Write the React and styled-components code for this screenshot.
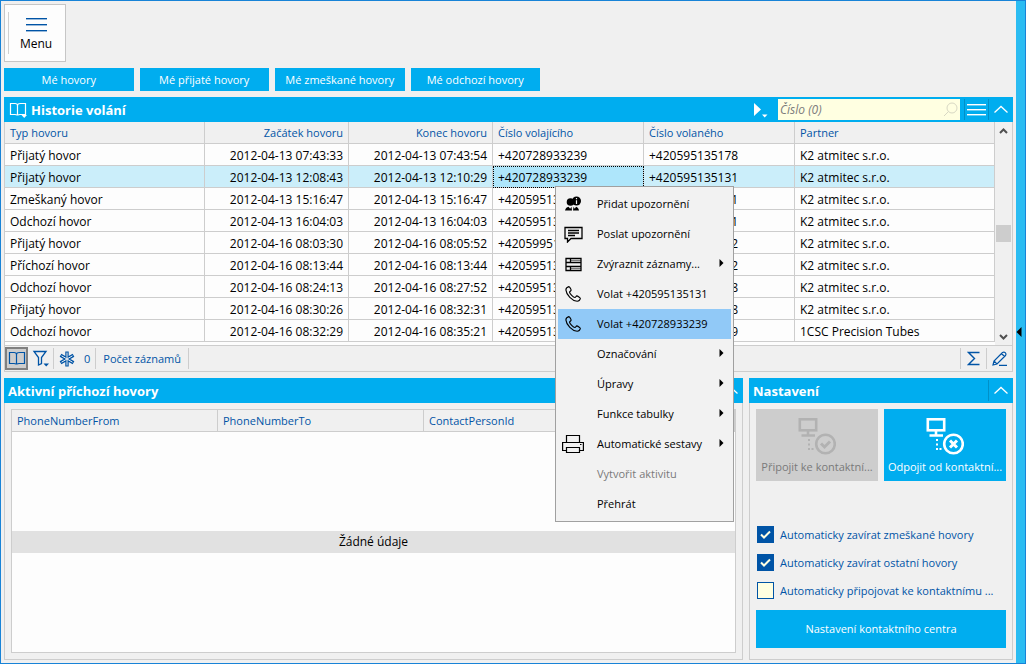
import styled, { createGlobalStyle, css } from "styled-components";

const GlobalStyle = createGlobalStyle`
  * {
    box-sizing: border-box;
  }
  body {
    margin: 0;
    background: #f0f0f0;
    color: #000;
    font-family: "Open Sans", "Noto Sans", sans-serif;
    font-size: 11px;
    line-height: 16px;
  }
  button,
  input {
    font: inherit;
    color: inherit;
    margin: 0;
    padding: 0;
    border: 0;
    background: none;
  }
`;

const colors = {
  accent: "#00adef",
  navy: "#0054a6",
  line: "#cdcdcd",
  paper: "#fdfdfd",
  cream: "#ffffe1",
};

const Window = styled.div`
  position: relative;
  display: flex;
  min-height: 100vh;
  border: 1px solid #1883d7;
`;

const Page = styled.main`
  flex: 1;
  min-width: 0;
  display: flex;
  flex-direction: column;
  padding: 3px;
`;

const SideStrip = styled.aside`
  width: 9px;
  display: flex;
  align-items: center;
  background: #2bbcf2;
`;

const MenuButton = styled.button`
  align-self: flex-start;
  display: flex;
  width: 62px;
  height: 58px;
  padding: 7px 2px 7px 3px;
  border: 1px solid #c6c6c6;
  background: ${colors.paper};
  font-size: 12px;
`;

const MenuGrip = styled.span`
  width: 1px;
  align-self: stretch;
  background: #d0d0d0;
`;

const MenuLabel = styled.span`
  flex: 1;
  display: flex;
  flex-direction: column;
  align-items: center;
  gap: 3px;
  padding-top: 5px;
`;

const QuickBar = styled.nav`
  display: flex;
  gap: 6px;
  max-width: 536px;
  margin: 6px 0;
`;

const AccentButton = styled.button`
  flex: ${({ $wide }) => ($wide ? "none" : "1")};
  height: ${({ $wide }) => ($wide ? "38px" : "23px")};
  background: ${colors.accent};
  color: #fff;
  white-space: nowrap;
`;

const Panel = styled.section`
  display: flex;
  flex-direction: column;
  min-width: 0;
`;

const PanelHeader = styled.header`
  display: flex;
  align-items: center;
  height: 25px;
  padding: 0 1px 0 4px;
  background: ${colors.accent};
  color: #fff;
`;

const PanelTitle = styled.h2`
  flex: 1;
  margin: 0;
  font-size: 13px;
  font-weight: 700;
`;

const HeaderButton = styled.button`
  display: flex;
  align-items: center;
  justify-content: center;
  width: 24px;
  height: 21px;
  border-left: ${({ $divided }) => ($divided ? "1px solid #0090c8" : "0")};
`;

const BookButton = styled(HeaderButton)`
  width: 20px;
  margin-right: 3px;
`;

const SearchBox = styled.label`
  display: flex;
  align-items: center;
  width: 182px;
  height: 21px;
  margin: 0 4px 0 6px;
  padding: 0 2px;
  background: ${colors.cream};
  color: #7c7c7c;
`;

const SearchInput = styled.input`
  flex: 1;
  min-width: 0;
  font-size: 12px;
  font-style: italic;
  outline: 0;
  &::placeholder {
    color: #7c7c7c;
    opacity: 1;
  }
`;

const PanelBody = styled.div`
  flex: 1;
  display: flex;
  flex-direction: column;
  padding: 6px;
  border: solid ${colors.line};
  border-width: 0 1px 1px;
`;

const GridArea = styled.div`
  display: flex;
  border: solid ${colors.line};
  border-width: 0 1px 1px;
`;

const TableHolder = styled.div`
  flex: 1;
  min-width: 0;
  padding-bottom: 3px;
  background: ${colors.paper};
`;

const Table = styled.table`
  width: 100%;
  table-layout: fixed;
  border-collapse: separate;
  border-spacing: 0;
`;

const Th = styled.th`
  width: ${({ $width }) => $width || "auto"};
  height: 22px;
  padding: 0 5px;
  border: solid ${colors.line};
  border-width: 0 1px 1px 0;
  background: #f0f0f0;
  color: ${colors.navy};
  font-weight: 400;
  text-align: ${({ $align }) => $align || "left"};
  white-space: nowrap;
`;

const Td = styled.td`
  height: 22px;
  padding: 2px 5px 0 5px;
  border: solid ${colors.line};
  border-width: 0 1px 1px 0;
  font-size: 12px;
  text-align: ${({ $align }) => $align || "left"};
  white-space: nowrap;
  overflow: hidden;
  ${({ $focused }) =>
    $focused &&
    css`
      background: #aee6fb;
      outline: 1px dotted #000;
      outline-offset: -1px;
    `}
`;

const Tr = styled.tr`
  background: ${({ $selected }) => ($selected ? "#cbeefa" : colors.paper)};
`;

const ScrollBar = styled.div`
  display: flex;
  flex-direction: column;
  align-items: center;
  justify-content: space-between;
  width: 17px;
  padding: 6px 0 5px;
`;

const Thumb = styled.span`
  width: 15px;
  height: 17px;
  margin-top: 91px;
  margin-bottom: auto;
  background: #cdcdcd;
`;

const StatusBar = styled.footer`
  display: flex;
  align-items: center;
  height: 26px;
  margin-bottom: 6px;
  border: solid ${colors.line};
  border-width: 0 1px 1px;
  color: ${colors.navy};
`;

const StatusItem = styled.button`
  display: flex;
  align-items: center;
  justify-content: center;
  gap: 9px;
  height: 21px;
  padding: 0 ${({ $pad }) => $pad || "7px"};
  border: solid ${colors.line};
  border-width: 0 ${({ $right }) => ($right ? "1px" : "0")} 0
    ${({ $left }) => ($left ? "1px" : "0")};
`;

const PressedItem = styled.button`
  display: flex;
  align-items: center;
  justify-content: center;
  width: 23px;
  height: 23px;
  border: 2px solid #808080;
  background: #cdcdcd;
`;

const Spacer = styled.span`
  flex: 1;
`;

const Columns = styled.div`
  flex: 1;
  display: grid;
  grid-template-columns: minmax(0, 1fr) 264px;
  gap: 6px;
`;

const EmptyGrid = styled.div`
  flex: 1;
  display: flex;
  flex-direction: column;
  border: 1px solid ${colors.line};
  background: ${colors.paper};
`;

const EmptyArea = styled.div`
  flex: 1;
  display: flex;
  flex-direction: column;
  justify-content: center;
`;

const EmptyNote = styled.p`
  margin: 0;
  padding: 3px 0;
  background: #e1e1e1;
  font-size: 12px;
  text-align: center;
`;

const Tiles = styled.div`
  display: grid;
  grid-template-columns: repeat(2, minmax(0, 1fr));
  gap: 6px;
`;

const Tile = styled.button`
  display: flex;
  flex-direction: column;
  align-items: center;
  justify-content: space-between;
  height: 72px;
  padding: 8px 0 6px;
  background: ${({ disabled }) => (disabled ? "#cdcdcd" : colors.accent)};
  color: ${({ disabled }) => (disabled ? "#7a7a7a" : "#fff")};
  white-space: nowrap;
  svg {
    color: ${({ disabled }) => (disabled ? "#b2b2b2" : "#fff")};
  }
`;

const Options = styled.div`
  display: flex;
  flex-direction: column;
  gap: 11px;
  margin: 45px 0 11px;
  padding-left: 1px;
`;

const Option = styled.label`
  display: flex;
  align-items: center;
  gap: 6px;
  height: 17px;
  color: ${colors.navy};
  white-space: nowrap;
`;

const CheckFrame = styled.span`
  display: grid;
  > * {
    grid-area: 1 / 1;
  }
  > svg {
    pointer-events: none;
  }
`;

const CheckInput = styled.input`
  appearance: none;
  width: 17px;
  height: 17px;
  border: 1px solid ${colors.navy};
  background: ${colors.cream};
  &:checked {
    background: ${colors.navy};
  }
`;

const ContextMenu = styled.div`
  position: absolute;
  top: 185px;
  left: 554px;
  width: 179px;
  padding: 2px;
  border: 1px solid #a0a0a0;
  background: #f2f2f2;
`;

const MenuItem = styled.button`
  display: flex;
  align-items: center;
  width: 100%;
  height: 30px;
  padding-right: 7px;
  text-align: left;
  white-space: nowrap;
  background: ${({ $active }) => ($active ? "#91c9f7" : "none")};
  color: ${({ disabled }) => (disabled ? "#7a7a7a" : "#000")};
`;

const MenuIcon = styled.span`
  width: 30px;
  margin-right: 9px;
  display: flex;
  align-items: center;
  justify-content: center;
`;

const MenuText = styled.span`
  flex: 1;
`;

const Stroke = ({ w = 20, h = 20, box, sw = 1, children }) => (
  <svg
    width={w}
    height={h}
    viewBox={box || `0 0 ${w} ${h}`}
    fill="none"
    stroke="currentColor"
    strokeWidth={sw}
    aria-hidden="true"
  >
    {children}
  </svg>
);

const Lines = ({ w, h, gap, color = "currentColor" }) => (
  <Stroke w={w} h={h} sw={1.4}>
    {[0, 1, 2].map((i) => (
      <path key={i} d={`M0 ${i * gap + 1.7}H${w}`} stroke={color} />
    ))}
  </Stroke>
);

const Book = ({ arrow }) => (
  <Stroke w={18} h={17} sw={1.2}>
    <path d="M1.5 2.5H6C7.5 2.5 8.5 3 8.5 4.5V14.5C8.5 13.5 7.5 13.5 6 13.5H1.5ZM16.5 2.5H11.5C9.5 2.5 8.5 3 8.5 4.5V14.5C8.5 13.5 9.5 13.5 11 13.5H16.5Z" />
    {arrow && <path d="M12.5 14H18L15.2 17Z" fill="currentColor" stroke="none" />}
  </Stroke>
);

const Chevron = () => (
  <Stroke w={14} h={9} sw={1.3}>
    <path d="M0.5 7.5L7 1.5L13.5 7.5" />
  </Stroke>
);

const Phone = () => (
  <Stroke w={18} h={18} box="0 0 24 24" sw={1.5}>
    <path d="M6.5 2.2C5 2.7 2.5 4.5 2.5 6.5C3 13 11 21.3 17.6 21.7C19.5 21.6 21.5 19.4 21.9 17.9C22 17.2 18 14.5 17.2 14.5C16 14.7 15.6 16.5 14.6 16.7C12.5 16.5 7.5 11.5 7.4 9.5C7.7 8.5 9.4 8 9.5 6.9C9.6 6 7.4 2.2 6.5 2.2Z" />
  </Stroke>
);

const ContactCentre = ({ ok }) => (
  <Stroke w={38} h={38} sw={2.6}>
    <rect x="1.8" y="2.3" width="16.4" height="11" />
    <path d="M10 13.5V18M3.5 18.5H17" />
    <path d="M11 22V24M11 26.5V28.5M11 31V33M14.5 31V33" strokeWidth={2} />
    <circle cx="27.5" cy="27" r="9.3" />
    {ok ? (
      <path d="M23 26.5L26.5 30L32 24.5" strokeWidth={3} />
    ) : (
      <path d="M24 23.5L31 30.5M31 23.5L24 30.5" strokeWidth={3} />
    )}
  </Stroke>
);

const Notice = () => (
  <svg width="18" height="16" viewBox="0 0 18 16" fill="#000" aria-hidden="true">
    <circle cx="6.5" cy="6" r="3.8" />
    <path d="M1 14.5C1.5 12 3 11.3 4.5 10.8L6.2 12.8L7.5 10.8L8 14.5Z" />
    <path d="M9 14.5L9.5 10.8L10.8 12.8L12 10.8C13.5 11.3 14.5 12.5 15 14.5Z" />
    <circle cx="12.5" cy="5" r="4.5" />
    <path d="M12.5 2V3.3M12.5 4.3V8" stroke="#f2f2f2" strokeWidth="1.2" />
  </svg>
);

const Message = () => (
  <Stroke w={19} h={17} sw={1.3}>
    <path d="M1 1.5H18V12.5H7L3.5 16V12.5H1ZM4 4.5H15M4 7H15M4 9.5H11" />
  </Stroke>
);

const Records = () => (
  <Stroke w={17} h={15} sw={1.3}>
    <path d="M1 1.5H16V13.5H1ZM1 5.5H16M1 9.5H16M5.5 1.5V5.5M5.5 9.5V13.5" />
    <path d="M5.5 3.5H16M5.5 11.5H16" strokeWidth="0.5" />
  </Stroke>
);

const Printer = () => (
  <Stroke w={22} h={20} sw={1.2}>
    <path d="M4.5 8.5V1.5H17.5V8.5M4.5 16.5H0.6V8.5H21.4V16.5H17.5M4.5 13.5H17.5V18.5H4.5Z" />
    <path d="M18 10.5H19.5" />
  </Stroke>
);

const Arrow = () => (
  <svg width="5" height="10" viewBox="0 0 5 10" aria-hidden="true">
    <path d="M0.5 0L4.5 4L0.5 8Z" fill="#000" />
  </svg>
);

const columns = [
  { label: "Typ hovoru", width: "200px" },
  { label: "Začátek hovoru", width: "144px", align: "right" },
  { label: "Konec hovoru", width: "144px", align: "right" },
  { label: "Číslo volajícího", width: "151px" },
  { label: "Číslo volaného", width: "151px" },
  { label: "Partner" },
];

const K2 = "K2 atmitec s.r.o.";

const calls = [
  ["Přijatý hovor", "2012-04-13 07:43:33", "2012-04-13 07:43:54", "+420728933239", "+420595135178", K2],
  ["Přijatý hovor", "2012-04-13 12:08:43", "2012-04-13 12:10:29", "+420728933239", "+420595135131", K2],
  ["Zmeškaný hovor", "2012-04-13 15:16:47", "2012-04-13 15:16:47", "+420595135178", "+420595135131", K2],
  ["Odchozí hovor", "2012-04-13 16:04:03", "2012-04-13 16:04:03", "+420595135178", "+420595135131", K2],
  ["Přijatý hovor", "2012-04-16 08:03:30", "2012-04-16 08:05:52", "+420599513517", "+420595135132", K2],
  ["Příchozí hovor", "2012-04-16 08:13:44", "2012-04-16 08:13:44", "+420595135131", "+420595135132", K2],
  ["Odchozí hovor", "2012-04-16 08:24:13", "2012-04-16 08:27:52", "+420595135131", "+420595135178", K2],
  ["Přijatý hovor", "2012-04-16 08:30:26", "2012-04-16 08:32:31", "+420595135131", "+420595135178", K2],
  ["Odchozí hovor", "2012-04-16 08:32:29", "2012-04-16 08:35:21", "+420595135131", "+420595135139", "1CSC Precision Tubes"],
];

const menuItems = [
  { label: "Přidat upozornění", icon: <Notice /> },
  { label: "Poslat upozornění", icon: <Message /> },
  { label: "Zvýraznit záznamy...", icon: <Records />, sub: true },
  { label: "Volat +420595135131", icon: <Phone /> },
  { label: "Volat +420728933239", icon: <Phone />, active: true },
  { label: "Označování", sub: true },
  { label: "Úpravy", sub: true },
  { label: "Funkce tabulky", sub: true },
  { label: "Automatické sestavy", icon: <Printer />, sub: true },
  { label: "Vytvořit aktivitu", disabled: true },
  { label: "Přehrát" },
];

const quickLinks = ["Mé hovory", "Mé přijaté hovory", "Mé zmeškané hovory", "Mé odchozí hovory"];

const options = [
  { label: "Automaticky zavírat zmeškané hovory", checked: true },
  { label: "Automaticky zavírat ostatní hovory", checked: true },
  { label: "Automaticky připojovat ke kontaktnímu ...", checked: false },
];

const CallHistory = () => (
  <Panel>
    <PanelHeader>
      <BookButton aria-label="Kniha">
        <Book arrow />
      </BookButton>
      <PanelTitle>Historie volání</PanelTitle>
      <HeaderButton aria-label="Spustit">
        <svg width="15" height="17" viewBox="0 0 15 17" fill="#fff">
          <path d="M1 2L8 8.5L1 15ZM9 13.5H14.5L11.7 16.5Z" />
        </svg>
      </HeaderButton>
      <SearchBox>
        <SearchInput placeholder="Číslo (0)" aria-label="Číslo" />
        <Stroke w={15} h={15}>
          <g stroke="#d8d8c4">
            <circle cx="9" cy="6" r="5" />
            <path d="M5.5 9.5L1 14" />
          </g>
        </Stroke>
      </SearchBox>
      <HeaderButton $divided aria-label="Nabídka">
        <Lines w={19} h={14} gap={5} />
      </HeaderButton>
      <HeaderButton $divided aria-label="Sbalit">
        <Chevron />
      </HeaderButton>
    </PanelHeader>
    <GridArea>
      <TableHolder>
        <Table>
          <thead>
            <tr>
              {columns.map((col) => (
                <Th key={col.label} $width={col.width} $align={col.align}>
                  {col.label}
                </Th>
              ))}
            </tr>
          </thead>
          <tbody>
            {calls.map((call, row) => (
              <Tr key={row} $selected={row === 1}>
                {call.map((value, i) => (
                  <Td key={i} $align={columns[i].align} $focused={row === 1 && i === 3}>
                    {value}
                  </Td>
                ))}
              </Tr>
            ))}
          </tbody>
        </Table>
      </TableHolder>
      <ScrollBar>
        <Stroke w={9} h={6} sw={2}>
          <path d="M1 5L4.5 1.5L8 5" stroke="#505050" />
        </Stroke>
        <Thumb />
        <Stroke w={9} h={6} sw={2}>
          <path d="M1 1L4.5 4.5L8 1" stroke="#505050" />
        </Stroke>
      </ScrollBar>
    </GridArea>
    <StatusBar>
      <PressedItem aria-label="Kniha">
        <Book />
      </PressedItem>
      <StatusItem $right $pad="4px" aria-label="Filtr">
        <Stroke w={17} h={17} sw={1.3}>
          <path d="M2 1.5H14L9.5 7.5V13.5L6.5 15V7.5Z" />
          <path d="M11.5 13.5H17L14.2 16.5Z" fill="currentColor" stroke="none" />
        </Stroke>
      </StatusItem>
      <StatusItem $right $pad="5px">
        <Stroke w={16} h={16} sw={3.4}>
          <path d="M8 0.5V15.5M1.5 4.2L14.5 11.8M14.5 4.2L1.5 11.8" />
          <path
            d="M8 1.5V14.5M2.5 4.8L13.5 11.2M13.5 4.8L2.5 11.2"
            stroke="#f0f0f0"
            strokeWidth="1"
          />
        </Stroke>
        0
      </StatusItem>
      <StatusItem $right>Počet záznamů</StatusItem>
      <Spacer />
      <StatusItem $left $pad="6px" aria-label="Součet">
        <Stroke w={13} h={15} sw={1.4}>
          <path d="M12.5 1.5H1.5L7.5 7.5L1.5 13.5H12.5" />
        </Stroke>
      </StatusItem>
      <StatusItem $left $pad="5px" aria-label="Upravit">
        <Stroke w={15} h={15} sw={1.2}>
          <path d="M1 14L2 10L10.5 1.5Q12 0.5 13.2 1.7Q14.5 3 13.5 4.5L5 13ZM2 10L5 13M9.5 2.5L12.5 5.5M7 14.4H15" />
        </Stroke>
      </StatusItem>
    </StatusBar>
  </Panel>
);

const ActiveCalls = () => (
  <Panel>
    <PanelHeader>
      <PanelTitle>Aktivní příchozí hovory</PanelTitle>
      <HeaderButton $divided aria-label="Sbalit">
        <Chevron />
      </HeaderButton>
    </PanelHeader>
    <PanelBody>
      <EmptyGrid>
        <Table>
          <thead>
            <tr>
              <Th $width="206px">PhoneNumberFrom</Th>
              <Th $width="206px">PhoneNumberTo</Th>
              <Th>ContactPersonId</Th>
            </tr>
          </thead>
        </Table>
        <EmptyArea>
          <EmptyNote>Žádné údaje</EmptyNote>
        </EmptyArea>
      </EmptyGrid>
    </PanelBody>
  </Panel>
);

const Settings = () => (
  <Panel>
    <PanelHeader>
      <PanelTitle>Nastavení</PanelTitle>
      <HeaderButton $divided aria-label="Sbalit">
        <Chevron />
      </HeaderButton>
    </PanelHeader>
    <PanelBody>
      <Tiles>
        <Tile disabled>
          <ContactCentre ok />
          Připojit ke kontaktní...
        </Tile>
        <Tile>
          <ContactCentre />
          Odpojit od kontaktní...
        </Tile>
      </Tiles>
      <Options>
        {options.map(({ label, checked }) => (
          <Option key={label}>
            <CheckFrame>
              <CheckInput type="checkbox" defaultChecked={checked} />
              {checked && (
                <Stroke w={17} h={17} sw={2}>
                  <path d="M4 8.5L7 11.5L13 5.5" stroke={colors.cream} />
                </Stroke>
              )}
            </CheckFrame>
            {label}
          </Option>
        ))}
      </Options>
      <AccentButton $wide>Nastavení kontaktního centra</AccentButton>
    </PanelBody>
  </Panel>
);

const App = () => (
  <>
    <GlobalStyle />
    <Window>
      <Page>
        <MenuButton>
          <MenuGrip />
          <MenuLabel>
            <Lines w={21} h={16} gap={6} color={colors.navy} />
            Menu
          </MenuLabel>
        </MenuButton>
        <QuickBar>
          {quickLinks.map((label) => (
            <AccentButton key={label}>{label}</AccentButton>
          ))}
        </QuickBar>
        <CallHistory />
        <Columns>
          <ActiveCalls />
          <Settings />
        </Columns>
      </Page>
      <SideStrip>
        <svg width="6" height="10" viewBox="0 0 6 10">
          <path d="M5.5 0V10L0.5 5Z" fill="#000" />
        </svg>
      </SideStrip>
      <ContextMenu>
        {menuItems.map(({ label, icon, sub, active, disabled }) => (
          <MenuItem key={label} $active={active} disabled={disabled}>
            <MenuIcon>{icon}</MenuIcon>
            <MenuText>{label}</MenuText>
            {sub && <Arrow />}
          </MenuItem>
        ))}
      </ContextMenu>
    </Window>
  </>
);

export default App;
